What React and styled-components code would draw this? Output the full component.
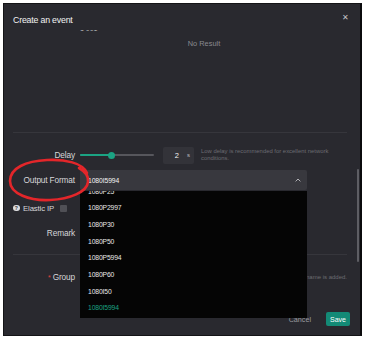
import React from "react";
import styled, { createGlobalStyle } from "styled-components";

const GlobalStyle = createGlobalStyle`
  html, body {
    margin: 0;
    background: #fff;
    font-family: "Liberation Sans", Arial, sans-serif;
  }
`;

const formats = ["1080P25", "1080P2997", "1080P30", "1080P50", "1080P5994", "1080P60", "1080I50", "1080I5994"];
const selected = "1080I5994";

/* ===================== styled ===================== */
const Page = styled.div`
  padding: 3px 0 0 3px;
`;

const Modal = styled.div`
  position: relative;
  box-sizing: border-box;
  width: 359px;
  height: 333px;
  background: #29292f;
  border: 1px solid #141417;
  border-right: 2px solid #0b0b0d;
  display: flex;
  flex-direction: column;
  color: #d9d9dc;
`;

const Header = styled.header`
  display: flex;
  align-items: center;
  justify-content: space-between;
  height: 26px;
  box-sizing: border-box;
  padding: 6px 11px 0 9px;
  flex: none;
`;

const Title = styled.div`
  font-size: 8.8px;
  letter-spacing: -0.2px;
  color: #f2f2f2;
`;

const Close = styled.span`
  font-size: 8px;
  color: #c4c4c8;
  margin-bottom: 4px;
  line-height: 1;
`;

const Body = styled.div`
  position: relative;
  flex: 1;
  overflow: hidden;
  padding: 0 13px 0 9px;
`;

const ClippedLine = styled.div`
  margin-top: -6px;
  height: 10px;
  line-height: 10px;
  padding-left: 67px;
  font-size: 7px;
  color: #b9b9bd;
`;

const Empty = styled.div`
  height: 98px;
  box-sizing: border-box;
  padding: 6px 0 0 48px;
  text-align: center;
  font-size: 7.4px;
  line-height: 8px;
  color: #8a8a90;
`;

const Divider = styled.div`
  height: 1px;
  background: #36363c;
  margin-top: ${(p) => p.$mt || 0}px;
`;

const FormRow = styled.div`
  display: grid;
  grid-template-columns: 62px 1fr;
  column-gap: 5px;
  align-items: center;
  margin-top: ${(p) => p.$mt}px;
  height: ${(p) => p.$h}px;
`;

const Label = styled.label`
  text-align: right;
  font-size: 8.3px;
  letter-spacing: -0.15px;
  color: #d6d6d9;
  white-space: nowrap;

  .req {
    color: #e0443e;
    margin-right: 2px;
    font-size: 7px;
  }
`;

const Control = styled.div`
  display: flex;
  align-items: center;
  min-width: 0;
  height: 100%;
`;

const Slider = styled.div`
  position: relative;
  width: 74px;
  height: 2px;
  border-radius: 1px;
  background: #56565c;
  flex: none;
`;

const SliderFill = styled.div`
  height: 100%;
  border-radius: 1px;
  background: #1ba383;
`;

const Thumb = styled.span`
  position: absolute;
  top: -2.5px;
  width: 7px;
  height: 7px;
  margin-left: -3.5px;
  border-radius: 50%;
  background: #1ba383;
`;

const NumberBox = styled.div`
  flex: none;
  margin-left: 9px;
  width: 31px;
  height: 17px;
  box-sizing: border-box;
  padding-right: 4px;
  border-radius: 2px;
  background: #333339;
  display: flex;
  align-items: center;
  justify-content: flex-end;
  font-size: 7.5px;
  color: #f2f2f2;

  .unit {
    margin-left: 8px;
    font-size: 6px;
    color: #bdbdc1;
  }
`;

const Hint = styled.div`
  margin-left: 7px;
  font-size: 5.9px;
  line-height: 7px;
  color: #6c6c72;
`;

const Select = styled.div`
  width: 227px;
  height: 20px;
  box-sizing: border-box;
  padding: 0 6px 0 8px;
  border-radius: 2px;
  background: #38383e;
  display: flex;
  align-items: center;
  justify-content: space-between;
  font-size: 6.8px;
  letter-spacing: -0.1px;
  color: #f4f4f4;
`;

const ElasticRow = styled.div`
  display: flex;
  align-items: center;
  margin-top: 11px;
  height: 14px;
  font-size: 7.8px;
  letter-spacing: -0.15px;
  color: #d6d6d9;
`;

const HelpIcon = styled.span`
  width: 6.5px;
  height: 6.5px;
  border-radius: 50%;
  background: #dcdcdf;
  color: #29292f;
  font-size: 5px;
  font-weight: 700;
  display: inline-flex;
  align-items: center;
  justify-content: center;
  margin-right: 3.5px;
`;

const Checkbox = styled.span`
  width: 7px;
  height: 7px;
  border-radius: 1px;
  background: #505056;
  margin-left: 6px;
`;

const GroupHint = styled.div`
  margin-left: auto;
  font-size: 6px;
  color: #6c6c72;
  white-space: nowrap;
`;

const ScrollThumb = styled.div`
  position: absolute;
  right: 1px;
  top: 139px;
  width: 2px;
  height: 93px;
  border-radius: 1px;
  background: #5e5e64;
`;

const Footer = styled.footer`
  flex: none;
  display: flex;
  align-items: center;
  justify-content: flex-end;
  gap: 15px;
  padding: 0 10px 9px 0;
`;

const CancelBtn = styled.span`
  font-size: 7.2px;
  color: #9a9a9f;
`;

const SaveBtn = styled.button`
  appearance: none;
  border: 0;
  width: 24px;
  height: 14px;
  padding: 0;
  border-radius: 2px;
  background: #138a76;
  color: #fff;
  font-family: inherit;
  font-size: 7px;
`;

const Dropdown = styled.div`
  position: absolute;
  left: 76px;
  top: 187px;
  width: 227px;
  height: 127px;
  overflow: hidden;
  background: #050505;
  z-index: 2;
`;

const OptionList = styled.ul`
  list-style: none;
  margin: -7.5px 0 0;
  padding: 0;
`;

const Option = styled.li`
  height: 16.7px;
  line-height: 16.7px;
  padding-left: 8px;
  font-size: 6.8px;
  letter-spacing: -0.15px;
  color: ${(p) => (p.$active ? "#1ba383" : "#e8e8e8")};
`;

const Annotation = styled.svg`
  position: absolute;
  left: 1px;
  top: 152px;
  z-index: 3;
  pointer-events: none;
`;

/* ===================== UI ===================== */
export default function App() {
  const delay = 2;
  const delayPct = 31;

  return (
    <Page>
      <GlobalStyle />
      <Modal>
        <Header>
          <Title>Create an event</Title>
          <Close>✕</Close>
        </Header>

        <Body>
          <ClippedLine>1 001</ClippedLine>
          <Empty>No Result</Empty>
          <Divider />

          <FormRow $mt={13} $h={18}>
            <Label>Delay</Label>
            <Control>
              <Slider>
                <SliderFill style={{ width: `${delayPct}px` }} />
                <Thumb style={{ left: `${delayPct}px` }} />
              </Slider>
              <NumberBox>
                {delay}
                <span className="unit">s</span>
              </NumberBox>
              <Hint>Low delay is recommended for excellent network conditions.</Hint>
            </Control>
          </FormRow>

          <FormRow $mt={6} $h={20}>
            <Label>Output Format</Label>
            <Control>
              <Select>
                <span>{selected}</span>
                <svg width="6" height="4" viewBox="0 0 6 4">
                  <polyline points="0.6,3.4 3,1 5.4,3.4" fill="none" stroke="#b0b0b4" strokeWidth="1" />
                </svg>
              </Select>
            </Control>
          </FormRow>

          <ElasticRow>
            <HelpIcon>?</HelpIcon>
            Elastic IP
            <Checkbox />
          </ElasticRow>

          <FormRow $mt={11} $h={14}>
            <Label>Remark</Label>
            <Control />
          </FormRow>

          <Divider $mt={14} />

          <FormRow $mt={15} $h={14}>
            <Label>
              <span className="req">*</span>Group
            </Label>
            <Control>
              <GroupHint>A default group with the same name is added.</GroupHint>
            </Control>
          </FormRow>

          <ScrollThumb />
        </Body>

        <Footer>
          <CancelBtn>Cancel</CancelBtn>
          <SaveBtn>Save</SaveBtn>
        </Footer>

        <Dropdown>
          <OptionList>
            {formats.map((f) => (
              <Option key={f} $active={f === selected}>
                {f}
              </Option>
            ))}
          </OptionList>
        </Dropdown>

        <Annotation width="88" height="50" viewBox="0 0 88 50">
          <path
            d="M82 17 C 78 7, 60 3, 42 4 C 21 5, 5 12, 5 25 C 5 38, 25 45, 45 44 C 65 43, 82 36, 83 26 C 84 20, 81 16, 74 12"
            fill="none"
            stroke="#e3262a"
            strokeWidth="2.6"
            strokeLinecap="round"
          />
        </Annotation>
      </Modal>
    </Page>
  );
}
